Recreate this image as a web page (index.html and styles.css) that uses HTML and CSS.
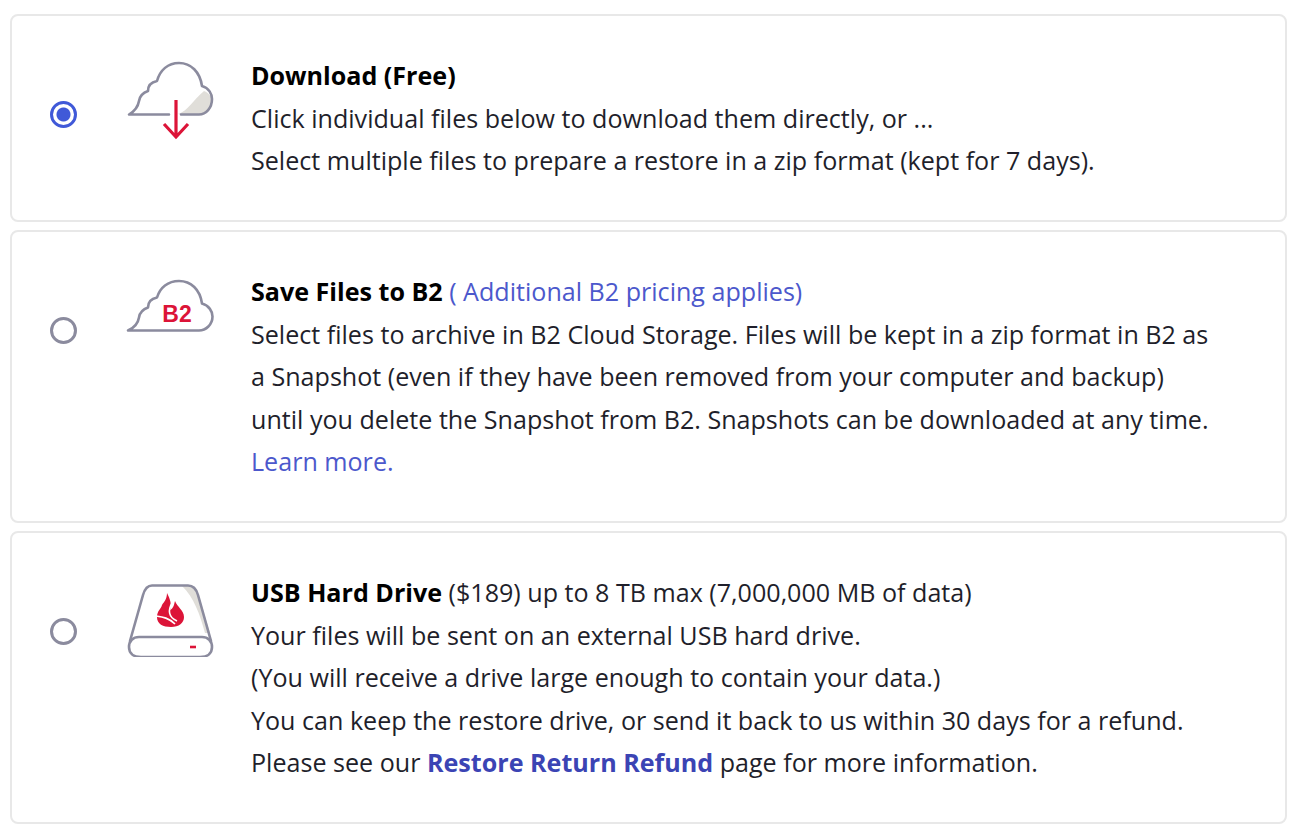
FILE: index.html
```html
<!DOCTYPE html>
<html lang="en">
<head>
  <meta charset="UTF-8" />
  <title>Restore Options</title>
  <link rel="stylesheet" href="styles.css">
</head>
<body>
  <div class="card">
    <input class="radio" type="radio" name="restore" checked />
    <svg class="icon" viewBox="125 60 90 80">
      <path class="shade" d="M178 114 C188 111 193 100 204 91 C209 93 212 97 212 101 C212 108 206 114 199 114 Z" />
      <path class="line" d="M169 114.500 H129 C135 111 138 107 139 101 C140 95 145 92 148 91 C148 85 152 82 157 81 C160 70 168 63 179 63 C191 63 200 72 202 86 C209 88 212 94 212 99 C212 108 206 114.500 199 114.500 H181" />
      <path class="arrow" d="M176 100 V137 M164 124 L176 137 L188 124" />
    </svg>
    <div class="text">
      <b>Download (Free)</b><br>
      Click individual files below to download them directly, or ...<br>
      Select multiple files to prepare a restore in a zip format (kept for 7 days).
    </div>
  </div>

  <div class="card">
    <input class="radio" type="radio" name="restore" />
    <svg class="icon" viewBox="125 275.500 90 80">
      <path class="line" d="M128 330 C135 327 138 323 139 317 C140 311 145 308 148 307 C148 301 152 298 157 297 C160 287 168 280.500 179 280.500 C191 280.500 200 289 202 303 C209 305 212.500 311 212.500 316 C212.500 324 206 330 199 330 Z" />
      <text class="b2" x="177" y="321" text-anchor="middle">B2</text>
    </svg>
    <div class="text">
      <b>Save Files to B2</b> <a class="plain" href="#">( Additional B2 pricing applies)</a><br>
      Select files to archive in B2 Cloud Storage. Files will be kept in a zip format in B2 as a Snapshot (even if they have been removed from your computer and backup) until you delete the Snapshot from B2. Snapshots can be downloaded at any time.<br>
      <a class="plain" href="#">Learn more.</a>
    </div>
  </div>

  <div class="card">
    <input class="radio" type="radio" name="restore" />
    <svg class="icon" viewBox="125 577 90 80">
      <path class="shade" d="M182 586 H189 C194 586 197 588 198 593 L210 633 H205 C200 615 194 597 182 586 Z" />
      <path class="line" d="M129 647 C129 641 133 637 139 637 H202 C208 637 212 641 212 647 C212 653 208 657 200 657 H141 C133 657 129 653 129 647 Z" />
      <path class="line" d="M130 641 L143 595 C145 588 148 585.500 152 585.500 H188 C193 585.500 196 588 198 595 L211 641" />
      <path class="flame" d="M167 593 C170 599 172 604 170 610 C174 608 174 604 175 601 C177 607 184 610 184 617 C184 623 179 627 171 627 C163 627 157 624 157 617 C157 611 161 609 162 605 C164 602 167 599 167 593 Z" />
      <path class="flame-cut" d="M156 616 C163 617 169 618 175 624 M172 603 C168 610 168 617 177 621" />
      <path class="led" d="M190 647 H196" />
    </svg>
    <div class="text">
      <b>USB Hard Drive</b> ($189) up to 8 TB max (7,000,000 MB of data)<br>
      Your files will be sent on an external USB hard drive.<br>
      (You will receive a drive large enough to contain your data.)<br>
      You can keep the restore drive, or send it back to us within 30 days for a refund.<br>
      Please see our <a class="strong" href="#">Restore Return Refund</a> page for more information.
    </div>
  </div>
</body>
</html>
```

FILE: styles.css
```css
body {
  font-family: 'Open Sans', sans-serif;
  font-size: 25.1px;
  line-height: 42.5px;
  color: #1f1f2b;
  background: #fff;
  margin: 0;
  padding: 14px 12px 13px 10px;
  display: flex;
  flex-direction: column;
  gap: 8.5px;
}
.card {
  display: flex;
  align-items: flex-start;
  border: 2px solid #e8e8e8;
  border-radius: 8px;
  padding: 38px 20px 38px 38px;
}
.radio {
  appearance: none;
  flex: none;
  width: 27px;
  height: 27px;
  margin: 46.5px 48px 0 0;
  border: 3.5px solid #8b8b9e;
  border-radius: 50%;
  background: #fff;
}
.radio:checked {
  border-color: #4059d8;
  background: radial-gradient(circle, #4059d8 0 6.5px, #fff 7.5px);
}
.icon {
  flex: none;
  width: 90px;
  height: 80px;
  margin: 6px 36px 0 0;
}
.text {
  max-width: 965px;
}
b {
  color: #000;
}
.line {
  fill: none;
  stroke: #8b8b9e;
  stroke-width: 2.6;
  stroke-linecap: round;
  stroke-linejoin: round;
}
.shade {
  fill: #e0ded9;
}
.arrow {
  fill: none;
  stroke: #dc1438;
  stroke-width: 3.2;
}
.b2 {
  font-family: 'Liberation Sans', sans-serif;
  font-size: 23px;
  font-weight: bold;
  fill: #dc1438;
}
.flame {
  fill: #dc1438;
}
.flame-cut {
  fill: none;
  stroke: #fff;
  stroke-width: 1.6;
}
.led {
  stroke: #dc1438;
  stroke-width: 2.6;
}
a {
  text-decoration: none;
}
.plain {
  color: #4c58cc;
}
.strong {
  color: #3b44b4;
  font-weight: bold;
}
```
